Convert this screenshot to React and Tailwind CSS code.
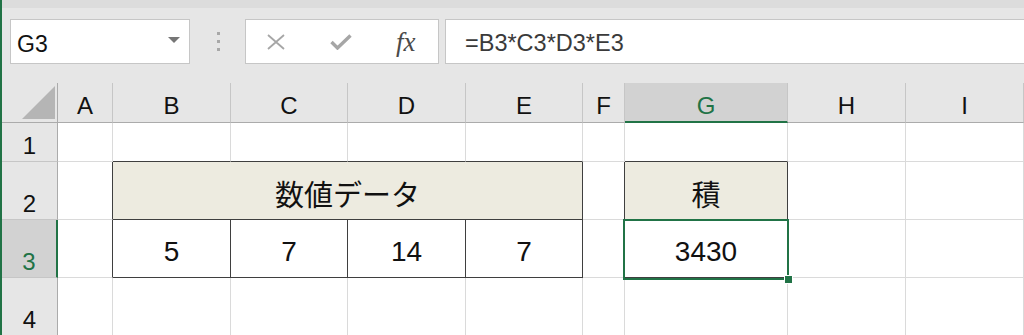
const GREEN = "#217346";

function ColHead({ label, selected }) {
  return (
    <div
      className={
        selected
          ? "flex justify-center pt-[11px] text-[24px] leading-none bg-[#d2d2d2] text-[#217346] border-r border-r-[#c6c6c6] border-b-2 border-b-[#217346]"
          : "flex justify-center pt-[11px] text-[24px] leading-none bg-[#e6e6e6] text-[#111] border-r border-r-[#c6c6c6] border-b border-b-[#ababab]"
      }
    >
      {label}
    </div>
  );
}

function RowHead({ label, selected }) {
  return (
    <div
      className={
        selected
          ? "flex items-end justify-center pb-[3px] text-[24px] leading-none bg-[#d2d2d2] text-[#217346] border-r-2 border-r-[#217346] border-b border-b-[#c6c6c6]"
          : "flex items-end justify-center pb-[3px] text-[24px] leading-none bg-[#e6e6e6] text-[#111] border-r border-r-[#ababab] border-b border-b-[#c6c6c6]"
      }
    >
      {label}
    </div>
  );
}

// r / b: colour of the right and bottom cell borders
function Cell({ r = "grid", b = "grid", className = "", children }) {
  const rc = r === "dark" ? "border-r-[#3f3f3f]" : "border-r-[#dadada]";
  const bc = b === "dark" ? "border-b-[#3f3f3f]" : "border-b-[#dadada]";
  return <div className={`bg-white border-r border-b ${rc} ${bc} ${className}`}>{children}</div>;
}

const num = "flex items-end justify-center pb-[11px] text-[28px] leading-none text-[#111]";
const jp = "bg-[#edebe0] border-r border-b border-[#3f3f3f] flex items-end justify-center pb-[11px] font-['Noto_Sans_CJK_JP',sans-serif] text-[29px] leading-none text-[#111]";

export default function App() {
  return (
    <div className="w-[1024px] h-[335px] overflow-hidden bg-[#e6e6e6] border-l-2 border-[#217346] font-['Liberation_Sans',sans-serif]">
      {/* ribbon edge */}
      <div className="h-[8px] bg-[#dcdcdc]" />

      {/* name box + formula bar */}
      <div className="flex items-stretch h-[45px] mt-[11px] mb-[19px]">
        <div className="shrink-0 ml-[8px] w-[180px] bg-white border border-[#c6c6c6] flex items-center pl-[6px] pr-[9px] pt-[5px]">
          <span className="text-[23px] leading-none text-[#111] flex-1">G3</span>
          <svg width="12" height="6" viewBox="0 0 12 6" className="-mt-[8px]">
            <polygon points="0,0 12,0 6,6" fill="#767676" />
          </svg>
        </div>
        <div className="shrink-0 w-[55px] flex flex-col items-center justify-center gap-[5px] pl-[2px]">
          <span className="w-[3px] h-[3px] bg-[#a8a8a8]" />
          <span className="w-[3px] h-[3px] bg-[#a8a8a8]" />
          <span className="w-[3px] h-[3px] bg-[#a8a8a8]" />
        </div>
        <div className="shrink-0 w-[194px] bg-white border border-[#c6c6c6] flex">
          <div className="flex-1 flex items-center justify-center -ml-[2px]">
            <svg width="20" height="16" viewBox="0 0 20 16">
              <path d="M2 1 L18 15 M18 1 L2 15" stroke="#a6a6a6" strokeWidth="1.8" fill="none" />
            </svg>
          </div>
          <div className="flex-1 flex items-center justify-center">
            <svg width="22" height="16" viewBox="0 0 22 16">
              <path d="M1.5 8 L7.5 14 L20.5 1.5" stroke="#a6a6a6" strokeWidth="3.4" fill="none" />
            </svg>
          </div>
          <div className="flex-1 flex items-center justify-center pt-[2px]">
            <span className="font-['Liberation_Serif',serif] italic text-[27px] leading-none text-[#4a4a4a]">fx</span>
          </div>
        </div>
        <div className="shrink-0 ml-[6px] w-[600px] bg-white border border-[#c6c6c6] flex items-center pl-[19px] pt-[4px]">
          <span className="text-[23.5px] leading-none text-[#3a3a3a]">=B3*C3*D3*E3</span>
        </div>
      </div>

      {/* sheet */}
      <div className="grid grid-cols-[56px_55px_118px_117px_118px_117px_42px_163px_118px_118px] grid-rows-[40px_39px_58px_58px_58px]">
        {/* column headers */}
        <div className="bg-[#e6e6e6] border-r border-r-[#ababab] border-b border-b-[#ababab]">
          <svg width="56" height="39" viewBox="0 0 56 39">
            <polygon points="20,36 53,3 53,36" fill="#b5b5b5" />
          </svg>
        </div>
        <ColHead label="A" />
        <ColHead label="B" />
        <ColHead label="C" />
        <ColHead label="D" />
        <ColHead label="E" />
        <ColHead label="F" />
        <ColHead label="G" selected />
        <ColHead label="H" />
        <ColHead label="I" />

        {/* row 1 */}
        <RowHead label="1" />
        <Cell />
        <Cell b="dark" />
        <Cell b="dark" />
        <Cell b="dark" />
        <Cell b="dark" />
        <Cell />
        <Cell b="dark" />
        <Cell />
        <Cell />

        {/* row 2 */}
        <RowHead label="2" />
        <Cell r="dark" />
        <div className={"col-span-4 " + jp}>数値データ</div>
        <Cell r="dark" />
        <div className={jp}>積</div>
        <Cell />
        <Cell />

        {/* row 3 */}
        <RowHead label="3" selected />
        <Cell r="dark" />
        <Cell r="dark" b="dark" className={num}>5</Cell>
        <Cell r="dark" b="dark" className={num}>7</Cell>
        <Cell r="dark" b="dark" className={num}>14</Cell>
        <Cell r="dark" b="dark" className={num}>7</Cell>
        <Cell r="dark" />
        <Cell r="dark" b="dark" className={"relative " + num}>
          3430
          <div className="absolute z-10 -left-[2px] -top-[1px] -right-[2px] -bottom-[3px] border-2 border-[#217346]">
            <div className="absolute -right-[6px] -bottom-[6px] w-[9px] h-[9px] bg-[#217346] border border-white" />
          </div>
        </Cell>
        <Cell />
        <Cell />

        {/* row 4 */}
        <RowHead label="4" />
        <Cell />
        <Cell />
        <Cell />
        <Cell />
        <Cell />
        <Cell />
        <Cell />
        <Cell />
        <Cell />
      </div>
    </div>
  );
}
